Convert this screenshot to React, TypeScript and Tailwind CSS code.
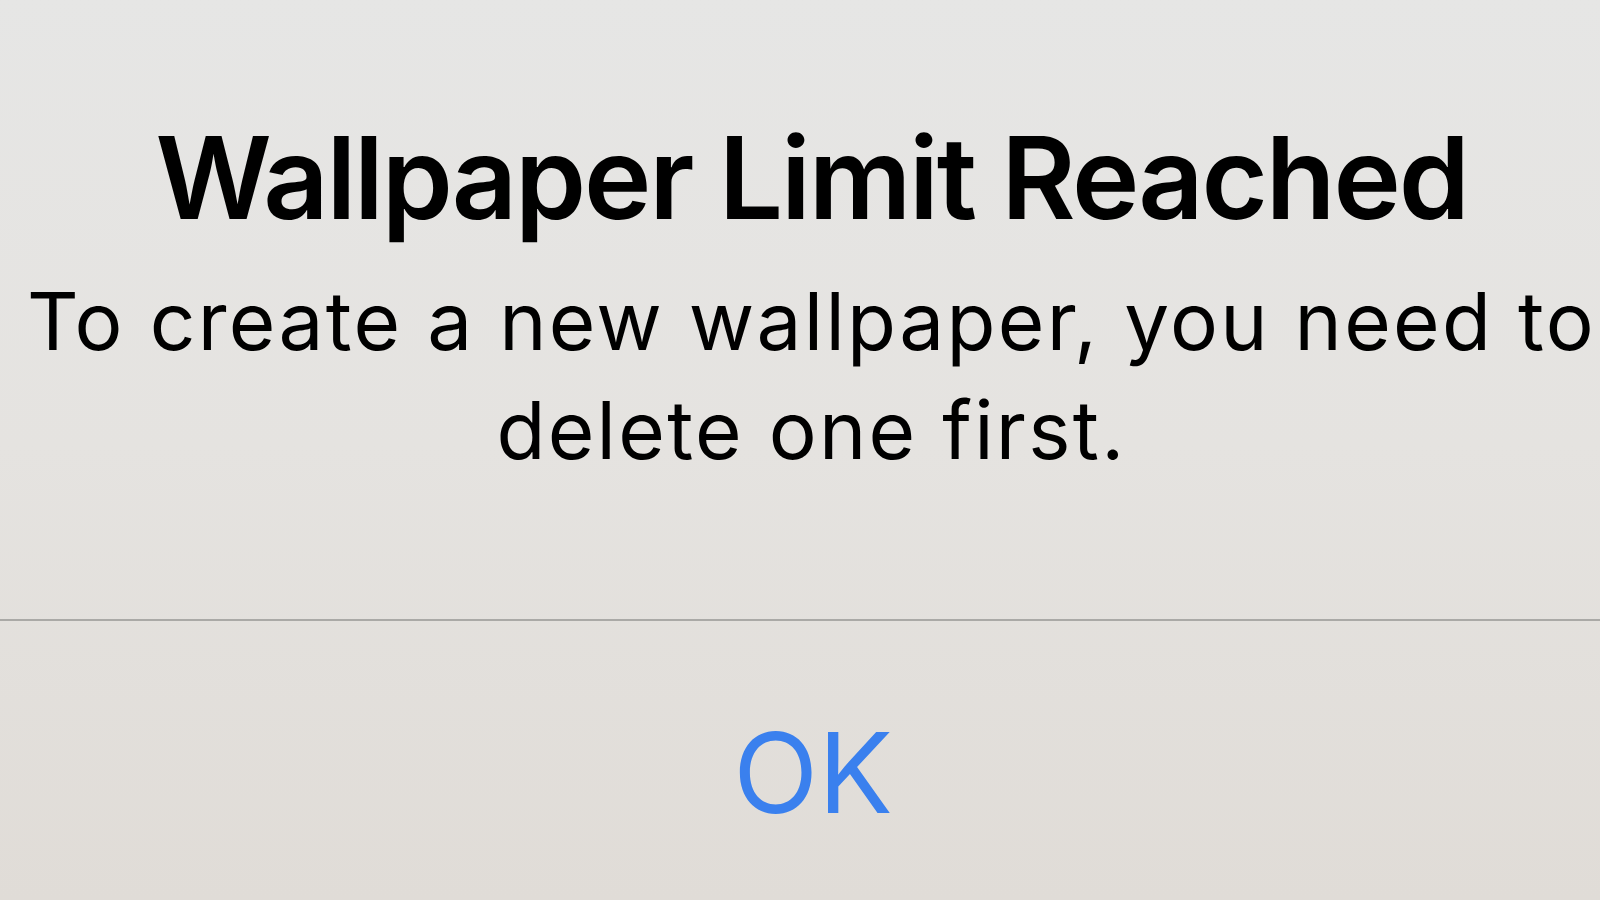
import React from 'react';

export default function App() {
  return (
    <main
      className="w-[1600px] h-[900px] overflow-hidden flex flex-col bg-gradient-to-b from-[#e6e6e5] via-[#e5e3e0] to-[#e0dcd7] text-black"
      style={{ fontFamily: 'Inter, "Noto Sans", sans-serif' }}
    >
      {/* Alert body */}
      <section className="h-[619px] flex flex-col items-center pt-[110px] pl-[23px]">
        <h1 className="text-[114px] leading-[136px] font-semibold tracking-[-2.2px] whitespace-nowrap">
          Wallpaper Limit Reached
        </h1>
        <p className="mt-[20px] text-[80px] leading-[109px] text-center tracking-[2.3px] whitespace-nowrap">
          To create a new wallpaper, you need to
          <br />
          delete one first.
        </p>
      </section>

      <div className="h-[2px] bg-[#aaa9a6]" />

      {/* Action */}
      <button className="flex-1 flex items-start justify-center pt-[87px] pl-[26px] text-[111px] leading-[130px] text-[#3a80ee]">
        OK
      </button>
    </main>
  );
}
